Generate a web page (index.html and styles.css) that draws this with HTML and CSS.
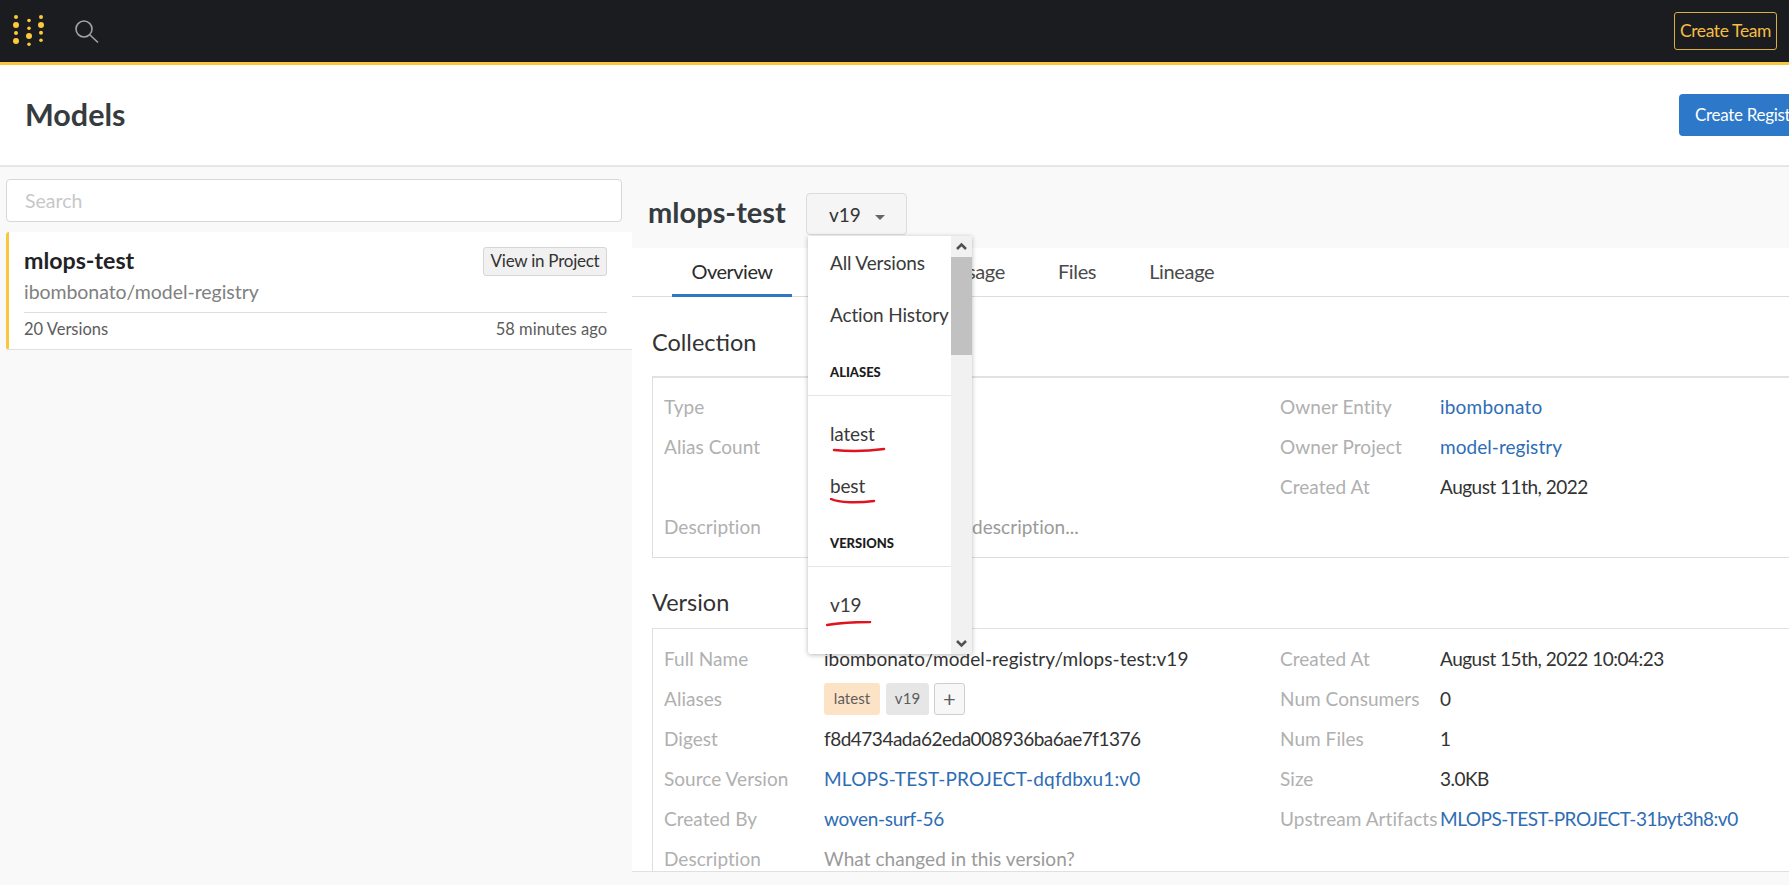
FILE: index.html
```html
<!DOCTYPE html>
<html lang="en">
<head>
    <meta charset="UTF-8">
    <meta name="viewport" content="width=device-width, initial-scale=1.0">
    <title>Models</title>
    <link rel="stylesheet" href="styles.css">
</head>
<body>

    <header class="topbar">
        <div class="topbar-left">
            <svg class="logo" width="50" height="50" viewBox="0 0 50 50" fill="#fcc93c">
                <circle cx="16" cy="17" r="2"/><circle cx="16" cy="25" r="3"/><circle cx="16" cy="33" r="2"/><circle cx="16" cy="41" r="3"/>
                <circle cx="29" cy="20.5" r="1.8"/><circle cx="29" cy="28.3" r="1.8"/><circle cx="29" cy="36" r="3"/><circle cx="29" cy="44.3" r="1.8"/>
                <circle cx="41" cy="17" r="2"/><circle cx="41" cy="25" r="3"/><circle cx="41" cy="32.7" r="2"/><circle cx="41" cy="40.3" r="1.8"/>
            </svg>
            <svg class="search-icon" width="24" height="24" viewBox="0 0 24 24" fill="none" stroke="#a0a2a5" stroke-width="1.6">
                <circle cx="9" cy="9" r="8"/>
                <path d="M15 15l8 7.5"/>
            </svg>
        </div>
        <a class="btn-team" href="#">Create Team</a>
    </header>

    <div class="page-title">
        <h1>Models</h1>
        <a class="btn-registry" href="#">Create Registry</a>
    </div>

    <main class="layout">
        <aside class="sidebar">
            <input class="search" type="text" placeholder="Search">
            <div class="model-card">
                <div class="card-top">
                    <div class="card-name">mlops-test</div>
                    <a class="btn-view" href="#">View in Project</a>
                </div>
                <div class="card-path">ibombonato/model-registry</div>
                <div class="card-foot">
                    <span>20 Versions</span>
                    <span>58 minutes ago</span>
                </div>
            </div>
        </aside>

        <section class="detail">
            <div class="detail-head">
                <h2>mlops-test</h2>
                <div class="version-wrap">
                    <button class="version-btn" type="button">v19<span class="caret"></span></button>

                    <div class="version-menu">
                        <div class="menu-list">
                            <div class="menu-item">All Versions</div>
                            <div class="menu-item">Action History</div>
                            <div class="menu-section">Aliases</div>
                            <div class="menu-item menu-first">latest
                                <svg class="scribble" width="56" height="6" viewBox="0 0 56 6"><path d="M3 3c14 1.500 32 1.500 50-1"/></svg>
                            </div>
                            <div class="menu-item">best
                                <svg class="scribble scribble-best" width="46" height="6" viewBox="0 0 46 6"><path d="M1 1c8 4 28 4 43 2"/></svg>
                            </div>
                            <div class="menu-section">Versions</div>
                            <div class="menu-item menu-first">v19
                                <svg class="scribble scribble-v" width="48" height="6" viewBox="0 0 48 6"><path d="M1 4c12-2 28-3 43-3"/></svg>
                            </div>
                        </div>
                        <div class="scrollbar">
                            <svg width="21" height="21" viewBox="0 0 21 21" fill="none" stroke="#505050" stroke-width="2.500"><path d="M6 13l4.500-4.500L15 13"/></svg>
                            <div class="scroll-thumb"></div>
                            <div class="scroll-rest"></div>
                            <svg width="21" height="21" viewBox="0 0 21 21" fill="none" stroke="#505050" stroke-width="2.500"><path d="M6 8l4.500 4.500L15 8"/></svg>
                        </div>
                    </div>
                </div>
            </div>

            <nav class="tabs">
                <a class="tab active" href="#">Overview</a>
                <span class="tab-hidden"></span>
                <a class="tab" href="#">Usage</a>
                <a class="tab" href="#">Files</a>
                <a class="tab" href="#">Lineage</a>
            </nav>

            <div class="overview">
                <h3>Collection</h3>
                <div class="info-box">
                    <div class="info-col">
                        <div class="row"><span class="label">Type</span></div>
                        <div class="row"><span class="label">Alias Count</span></div>
                        <div class="row"></div>
                        <div class="row"><span class="label">Description</span><span class="muted behind-menu">description...</span></div>
                    </div>
                    <div class="info-col">
                        <div class="row"><span class="label">Owner Entity</span><a class="wide" href="#">ibombonato</a></div>
                        <div class="row"><span class="label">Owner Project</span><a href="#">model-registry</a></div>
                        <div class="row"><span class="label">Created At</span><span class="num">August 11th, 2022</span></div>
                    </div>
                </div>

                <h3 class="version-title">Version</h3>
                <div class="info-box">
                    <div class="info-col">
                        <div class="row"><span class="label">Full Name</span><span>ibombonato/model-registry/mlops-test:v19</span></div>
                        <div class="row">
                            <span class="label">Aliases</span>
                            <span class="chips">
                                <span class="chip chip-latest">latest</span>
                                <span class="chip chip-version">v19</span>
                                <span class="chip chip-add">+</span>
                            </span>
                        </div>
                        <div class="row"><span class="label">Digest</span><span class="num">f8d4734ada62eda008936ba6ae7f1376</span></div>
                        <div class="row"><span class="label">Source Version</span><a class="wide" href="#">MLOPS-TEST-PROJECT-dqfdbxu1:v0</a></div>
                        <div class="row"><span class="label">Created By</span><a class="tight" href="#">woven-surf-56</a></div>
                        <div class="row"><span class="label">Description</span><span class="muted">What changed in this version?</span></div>
                    </div>
                    <div class="info-col">
                        <div class="row"><span class="label">Created At</span><span class="num">August 15th, 2022 10:04:23</span></div>
                        <div class="row"><span class="label">Num Consumers</span><span>0</span></div>
                        <div class="row"><span class="label">Num Files</span><span>1</span></div>
                        <div class="row"><span class="label">Size</span><span class="num">3.0KB</span></div>
                        <div class="row"><span class="label">Upstream Artifacts</span><a class="num" href="#">MLOPS-TEST-PROJECT-31byt3h8:v0</a></div>
                    </div>
                </div>
            </div>
        </section>
    </main>

</body>
</html>
```

FILE: styles.css
```css
/* Basic Reset */
* {
    margin: 0;
    padding: 0;
    box-sizing: border-box;
}

html, body {
    height: 100%;
    overflow: hidden;
}

body {
    font-family: 'Lato', 'Noto Sans', sans-serif;
    font-size: 19px;
    background-color: #f9f9f9;
    color: #333;
    display: flex;
    flex-direction: column;
}

a {
    color: #2e6db4;
    text-decoration: none;
}

/* Top bar */
.topbar {
    height: 65px;
    flex-shrink: 0;
    background-color: #1b1c1f;
    border-bottom: 3px solid #f9c63f;
    display: flex;
    align-items: center;
    justify-content: space-between;
    padding-right: 12px;
}

.topbar-left {
    display: flex;
    align-items: flex-start;
    height: 62px;
}

.search-icon {
    margin: 20px 0 0 25px;
}

.btn-team {
    width: 103px;
    height: 38px;
    line-height: 36px;
    text-align: center;
    border: 1px solid #d9ae42;
    border-radius: 3px;
    color: #f5bd45;
    font-size: 17.500px;
    letter-spacing: -0.4px;
    white-space: nowrap;
}

/* Page title */
.page-title {
    height: 102px;
    flex-shrink: 0;
    background-color: white;
    border-bottom: 2px solid #e6e6e6;
    display: flex;
    align-items: center;
    justify-content: space-between;
    padding-left: 25px;
}

.page-title h1 {
    font-size: 30.500px;
    font-weight: 700;
    color: #363b40;
    padding-bottom: 2px;
}

.btn-registry {
    width: 110px;
    height: 42px;
    line-height: 42px;
    padding-left: 16px;
    background-color: #2d78c8;
    color: white;
    border-radius: 4px 0 0 4px;
    white-space: nowrap;
    overflow: hidden;
    font-size: 17px;
    letter-spacing: -0.3px;
}

/* Main layout */
.layout {
    flex: 1;
    min-height: 0;
    display: flex;
    padding-bottom: 13px;
}

.sidebar {
    width: 632px;
    flex-shrink: 0;
    padding: 12px 0 0 6px;
}

.search {
    display: block;
    width: 616px;
    height: 43px;
    padding: 0 18px;
    font-family: inherit;
    font-size: 19.500px;
    background-color: white;
    border: 1px solid #d8d8d8;
    border-radius: 4px;
}

.search::placeholder {
    color: #c8c8c8;
}

.model-card {
    height: 118px;
    margin-top: 10px;
    padding: 15px 25px 0 15px;
    background-color: white;
    border-left: 3px solid #f9c63f;
    border-bottom: 1px solid #e0e0e0;
    border-radius: 3px 0 0 3px;
}

.card-top {
    display: flex;
    justify-content: space-between;
    height: 29px;
}

.card-name {
    font-size: 23.200px;
    font-weight: 700;
    line-height: 27px;
    color: #1f2226;
}

.btn-view {
    width: 124px;
    height: 29px;
    line-height: 25px;
    text-align: center;
    background-color: #f1f1f1;
    border: 1px solid #d6d6d6;
    border-radius: 3px;
    color: #333;
    font-size: 17px;
    letter-spacing: -0.25px;
}

.card-path {
    margin-top: 3px;
    height: 32px;
    line-height: 26px;
    color: #808080;
    font-size: 19.500px;
    letter-spacing: -0.05px;
}

.card-foot {
    border-top: 1px solid #dedede;
    margin-top: 1px;
    padding-top: 6px;
    display: flex;
    justify-content: space-between;
    font-size: 16.500px;
    color: #5c5c5c;
}

/* Detail panel */
.detail {
    flex: 1;
    min-width: 0;
    background-color: white;
    border-bottom: 1px solid #e0e0e0;
    overflow: hidden;
    position: relative;
}

.detail-head {
    height: 81px;
    background-color: #f9f9f9;
    padding: 26px 0 0 16px;
    display: flex;
    align-items: flex-start;
}

.detail-head h2 {
    font-size: 29px;
    font-weight: 700;
    color: #363b40;
    width: 158px;
    margin-top: 1px;
}

.version-wrap {
    position: relative;
}

.version-btn {
    width: 101px;
    height: 42px;
    padding-left: 22px;
    text-align: left;
    font-family: inherit;
    font-size: 19px;
    color: #333;
    background-color: #f5f5f5;
    border: 1px solid #dcdcdc;
    border-radius: 4px;
}

.caret {
    display: inline-block;
    margin-left: 14px;
    vertical-align: 2px;
    border-left: 5px solid transparent;
    border-right: 5px solid transparent;
    border-top: 5px solid #666;
}

/* Version dropdown */
.version-menu {
    position: absolute;
    top: 43px;
    left: 2px;
    z-index: 5;
    width: 164px;
    height: 418px;
    display: flex;
    background-color: white;
    border-radius: 0 0 3px 3px;
    box-shadow: 0 1px 5px rgba(0, 0, 0, 0.28);
}

.menu-list {
    flex: 1;
    overflow: hidden;
}

.menu-item {
    position: relative;
    height: 52px;
    line-height: 53px;
    padding-left: 22px;
    font-size: 19px;
    letter-spacing: -0.15px;
    color: #3a3a3a;
    white-space: nowrap;
}

.menu-first {
    margin-top: 11px;
}

.menu-section {
    height: 56px;
    padding: 24px 0 0 22px;
    border-bottom: 1px solid #e6e6e6;
    font-size: 13px;
    font-weight: 900;
    text-transform: uppercase;
    color: #1c1c1c;
}

.scribble {
    position: absolute;
    left: 23px;
    top: 40px;
}

.scribble path {
    fill: none;
    stroke: #e0141f;
    stroke-width: 2.500;
    stroke-linecap: round;
}

.scribble-best {
    left: 22px;
    top: 39px;
}

.scribble-v {
    left: 18px;
    top: 43px;
}

.scrollbar {
    width: 21px;
    display: flex;
    flex-direction: column;
    background-color: #f1f1f1;
}

.scroll-thumb {
    height: 98px;
    background-color: #c1c1c1;
}

.scroll-rest {
    flex: 1;
}

/* Tabs */
.tabs {
    height: 49px;
    display: flex;
    gap: 11px;
    padding-left: 40px;
    border-bottom: 1px solid #dcdcdc;
}

.tab {
    height: 49px;
    line-height: 46px;
    padding: 0 21px;
    color: #4a4a4a;
    font-size: 20px;
    letter-spacing: -0.35px;
}

.tab.active {
    width: 120px;
    padding: 0;
    text-align: center;
    letter-spacing: -0.5px;
    color: #2b2b2b;
    border-bottom: 3px solid #2e78c7;
}

/* tab that sits under the open dropdown */
.tab-hidden {
    width: 118px;
}

/* Overview content */
.overview {
    padding: 0 0 0 20px;
}

.overview h3 {
    height: 79px;
    padding-top: 31px;
    font-size: 23.500px;
    font-weight: 400;
    color: #333;
}

.overview .version-title {
    height: 70px;
    padding-top: 30px;
}

.info-box {
    display: flex;
    padding: 10px 0 9px 11px;
    border-top: 2px solid #e2e2e2;
    border-left: 1px solid #dedede;
    border-bottom: 1px solid #dedede;
}

.version-title + .info-box {
    border-top-width: 1px;
    padding-top: 11px;
}

.info-col {
    width: 616px;
    flex-shrink: 0;
}

.row {
    height: 40px;
    padding-bottom: 3px;
    display: flex;
    align-items: center;
    white-space: nowrap;
    letter-spacing: 0.05px;
}

.label {
    width: 160px;
    flex-shrink: 0;
    color: #b0b0b0;
}

.num {
    letter-spacing: -0.5px;
}

.wide {
    letter-spacing: 0.2px;
}

.tight {
    letter-spacing: -0.3px;
}

.muted {
    color: #9a9a9a;
}

.behind-menu {
    padding-left: 148px;
}

.chips {
    display: flex;
    gap: 6px;
}

.chip {
    height: 32px;
    line-height: 30px;
    text-align: center;
    border-radius: 3px;
    font-size: 15px;
    color: #5d5d5d;
}

.chip-latest {
    width: 56px;
    background-color: #fde3c5;
}

.chip-version {
    width: 43px;
    background-color: #e6e6e6;
}

.chip-add {
    width: 31px;
    margin-left: -1px;
    font-size: 22px;
    background-color: #f7f7f7;
    border: 1px solid #cfcfcf;
}
```
